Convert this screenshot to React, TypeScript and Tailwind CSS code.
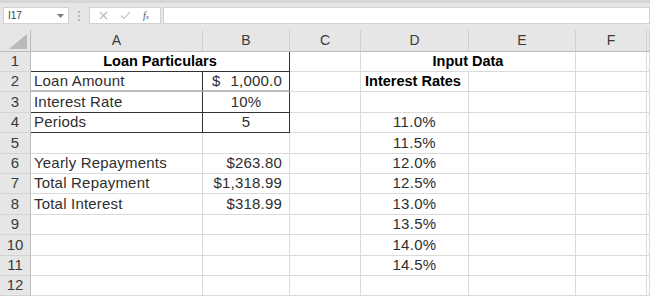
import React from 'react'

const FONT = { fontFamily: '"Liberation Sans", Arial, sans-serif' }

const grid = 'border-r border-b border-[#dadada]'

function Cell({ className = '', children }: { className?: string; children?: React.ReactNode }) {
    return <div className={`flex items-center overflow-visible whitespace-nowrap ${className}`}>{children}</div>
}

export default function App() {
    const rates = ['11.0%', '11.5%', '12.0%', '12.5%', '13.0%', '13.5%', '14.0%', '14.5%']
    const heights = ['h-[20px]', 'h-[20px]', 'h-[21px]', 'h-[20px]', 'h-[21px]', 'h-[20px]', 'h-[20px]', 'h-[21px]', 'h-[20px]', 'h-[21px]', 'h-[20px]', 'h-[20px]']

    const aLabels: Record<number, string> = {
        2: 'Loan Amount',
        3: 'Interest Rate',
        4: 'Periods',
        6: 'Yearly Repayments',
        7: 'Total Repayment',
        8: 'Total Interest',
    }
    const bRight: Record<number, string> = { 6: '$263.80', 7: '$1,318.99', 8: '$318.99' }

    return (
        <div className="w-[650px] h-[300px] overflow-hidden bg-white text-[#2e2e2e]" style={FONT}>
            {/* Formula bar */}
            <div className="h-[30px] bg-[#e6e6e6] border-t-[3px] border-[#d6d6d6] flex items-start pt-[4px]">
                <div className="ml-[3px] w-[66px] h-[17px] bg-white border border-[#d2d2d2] flex items-center justify-between px-[4px]">
                    <span className="text-[10px] text-[#444]">I17</span>
                    <svg width="7" height="4" viewBox="0 0 7 4">
                        <polygon points="0,0 7,0 3.5,4" fill="#7a7a7a" />
                    </svg>
                </div>
                <div className="ml-[9px] mt-[4px] flex flex-col gap-[2px]">
                    <span className="w-[2px] h-[2px] bg-[#b5b5b5]" />
                    <span className="w-[2px] h-[2px] bg-[#b5b5b5]" />
                    <span className="w-[2px] h-[2px] bg-[#b5b5b5]" />
                </div>
                <div className="ml-[9px] w-[72px] h-[17px] bg-white border border-[#d2d2d2] flex items-center">
                    <svg className="ml-[9px]" width="9" height="9" viewBox="0 0 9 9">
                        <path d="M1 1 L8 8 M8 1 L1 8" stroke="#b8b8b8" strokeWidth="1.1" />
                    </svg>
                    <svg className="ml-[12px]" width="11" height="9" viewBox="0 0 11 9">
                        <path d="M1 4.5 L4 7.5 L10 1" stroke="#b8b8b8" strokeWidth="1.1" fill="none" />
                    </svg>
                    <span className="ml-[12px] text-[10px] italic text-[#555]" style={{ fontFamily: '"Liberation Serif", serif' }}>
                        f<span className="text-[7px]">x</span>
                    </span>
                </div>
                <div className="ml-[2px] flex-1 h-[17px] bg-white border border-[#d2d2d2]" />
            </div>

            {/* Sheet */}
            <div className="grid grid-cols-[31px_172px_87px_71px_108px_107px_71px_1fr]">
                {/* Column headers */}
                <div className="h-[22px] bg-[#e6e6e6] border-r border-b border-[#bcbcbc] flex items-end justify-end pr-[3px] pb-[2px]">
                    <svg width="18" height="15" viewBox="0 0 18 15">
                        <polygon points="18,0 18,15 0,15" fill="#b9b9b9" />
                    </svg>
                </div>
                {['A', 'B', 'C', 'D', 'E', 'F', ''].map((l, i) => (
                    <div
                        key={i}
                        className="h-[22px] bg-[#e6e6e6] border-r border-b border-r-[#d0d0d0] border-b-[#bcbcbc] flex items-center justify-center text-[14px] text-[#3a3a3a]"
                    >
                        {l}
                    </div>
                ))}

                {heights.map((h, idx) => {
                    const n = idx + 1
                    const rowHead = (
                        <div key="h" className={`${h} bg-[#e6e6e6] border-r border-b border-r-[#bcbcbc] border-b-[#d4d4d4] flex items-center justify-center text-[15px] text-[#3a3a3a]`}>
                            {n}
                        </div>
                    )
                    const rate = n >= 4 && n <= 11 ? rates[n - 4] : null

                    if (n === 1) {
                        return (
                            <React.Fragment key={n}>
                                {rowHead}
                                <Cell className={`${h} col-span-2 justify-center border-r border-b border-[#333] font-bold text-[14.5px] text-black`}>
                                    Loan Particulars
                                </Cell>
                                <Cell className={`${h} ${grid}`} />
                                <Cell className={`${h} col-span-2 justify-center ${grid} font-bold text-[14.5px] text-black`}>
                                    Input Data
                                </Cell>
                                <Cell className={`${h} ${grid}`} />
                                <Cell className={`${h} ${grid}`} />
                            </React.Fragment>
                        )
                    }

                    const boxed = n >= 2 && n <= 4
                    const aBorder = boxed
                        ? n === 2
                            ? 'border-r border-b-2 border-r-[#333] border-b-[#bdbdbd]'
                            : 'border-r border-b border-[#333]'
                        : grid

                    let bContent: React.ReactNode = null
                    let bAlign = ''
                    if (n === 2) {
                        bContent = (
                            <>
                                <span>$</span>
                                <span>1,000.0</span>
                            </>
                        )
                        bAlign = 'justify-between pl-[9px] pr-[7px]'
                    } else if (n === 3) {
                        bContent = '10%'
                        bAlign = 'justify-center'
                    } else if (n === 4) {
                        bContent = '5'
                        bAlign = 'justify-center'
                    } else if (bRight[n]) {
                        bContent = bRight[n]
                        bAlign = 'justify-end pr-[7px]'
                    }

                    return (
                        <React.Fragment key={n}>
                            {rowHead}
                            <Cell className={`${h} ${aBorder} pl-[3px] text-[15px] tracking-[0.2px]`}>{aLabels[n]}</Cell>
                            <Cell className={`${h} ${aBorder} text-[15px] tracking-[0.2px] ${bAlign}`}>{bContent}</Cell>
                            <Cell className={`${h} ${grid}`} />
                            {n === 2 ? (
                                <Cell className={`${h} ${grid} pl-[4px] font-bold text-[14.5px] text-black relative z-10`}>
                                    Interest Rates
                                </Cell>
                            ) : (
                                <Cell className={`${h} ${grid} justify-center text-[15px] tracking-[0.3px]`}>{rate}</Cell>
                            )}
                            <Cell className={`${h} ${grid}`} />
                            <Cell className={`${h} ${grid}`} />
                            <Cell className={`${h} ${grid}`} />
                        </React.Fragment>
                    )
                })}
            </div>
        </div>
    )
}
